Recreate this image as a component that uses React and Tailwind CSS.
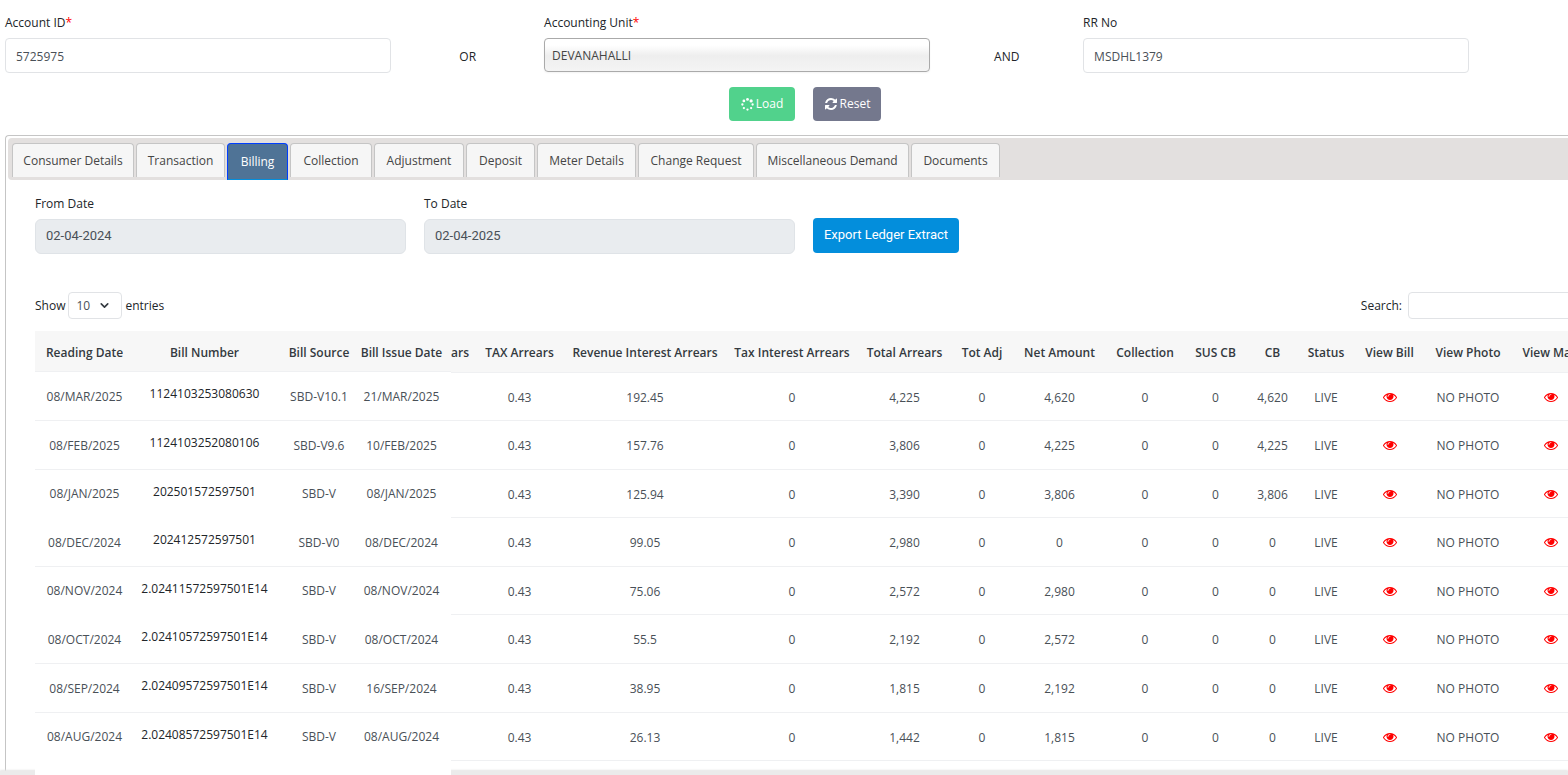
import { ChevronDown } from "lucide-react";

const tabs = [
  { label: "Consumer Details", width: "w-[122px]" },
  { label: "Transaction", width: "w-[89px]" },
  { label: "Billing", width: "w-[61px]" },
  { label: "Collection", width: "w-[82px]" },
  { label: "Adjustment", width: "w-[90px]" },
  { label: "Deposit", width: "w-[69px]" },
  { label: "Meter Details", width: "w-[99px]" },
  { label: "Change Request", width: "w-[116px]" },
  { label: "Miscellaneous Demand", width: "w-[153px]" },
  { label: "Documents", width: "w-[89px]" },
];

const bills = [
  { date: "08/MAR/2025", no: "1124103253080630", src: "SBD-V10.1", issued: "21/MAR/2025", interest: "192.45", total: "4,225", net: "4,620", cb: "4,620" },
  { date: "08/FEB/2025", no: "1124103252080106", src: "SBD-V9.6", issued: "10/FEB/2025", interest: "157.76", total: "3,806", net: "4,225", cb: "4,225" },
  { date: "08/JAN/2025", no: "202501572597501", src: "SBD-V", issued: "08/JAN/2025", interest: "125.94", total: "3,390", net: "3,806", cb: "3,806" },
  { date: "08/DEC/2024", no: "202412572597501", src: "SBD-V0", issued: "08/DEC/2024", interest: "99.05", total: "2,980", net: "0", cb: "0" },
  { date: "08/NOV/2024", no: "2.02411572597501E14", src: "SBD-V", issued: "08/NOV/2024", interest: "75.06", total: "2,572", net: "2,980", cb: "0" },
  { date: "08/OCT/2024", no: "2.02410572597501E14", src: "SBD-V", issued: "08/OCT/2024", interest: "55.5", total: "2,192", net: "2,572", cb: "0" },
  { date: "08/SEP/2024", no: "2.02409572597501E14", src: "SBD-V", issued: "16/SEP/2024", interest: "38.95", total: "1,815", net: "2,192", cb: "0" },
  { date: "08/AUG/2024", no: "2.02408572597501E14", src: "SBD-V", issued: "08/AUG/2024", interest: "26.13", total: "1,442", net: "1,815", cb: "0" },
];

// rows whose divider is hidden in the frozen part
const noLine = [2, 4, 7];

function SpinnerIcon() {
  return (
    <svg width="13" height="13" viewBox="0 0 1792 1792" fill="currentColor" aria-hidden="true">
      <circle cx="896" cy="192" r="192" />
      <circle cx="1394" cy="398" r="224" />
      <circle cx="1600" cy="896" r="160" />
      <circle cx="1394" cy="1394" r="160" />
      <circle cx="896" cy="1600" r="160" />
      <circle cx="398" cy="1394" r="160" />
      <circle cx="192" cy="896" r="160" />
      <circle cx="398" cy="398" r="192" />
    </svg>
  );
}

function RefreshIcon() {
  return (
    <svg width="14" height="14" viewBox="0 0 1792 1792" fill="currentColor" aria-hidden="true">
      <path d="M1639 1056q0 5-1 7-64 268-268 434.5t-478 166.5q-146 0-282.5-55t-243.5-157l-129 129q-19 19-45 19t-45-19-19-45v-448q0-26 19-45t45-19h448q26 0 45 19t19 45-19 45l-137 137q71 66 161 102t187 36q134 0 250-65t186-179q11-17 53-117 8-23 30-23h192q13 0 22.5 9.5t9.5 22.5zm25-800v448q0 26-19 45t-45 19h-448q-26 0-45-19t-19-45 19-45l138-138q-148-137-349-137-134 0-250 65t-186 179q-11 17-53 117-8 23-30 23h-199q-13 0-22.5-9.5t-9.5-22.5v-7q65-268 270-434.5t480-166.5q146 0 284 55.5t245 156.5l130-129q19-19 45-19t45 19 19 45z" />
    </svg>
  );
}

function EyeButton({ label }) {
  return (
    <button type="button" aria-label={label} className="align-middle text-[#ff0000]">
      <svg width="14" height="14" viewBox="0 0 1792 1792" fill="currentColor">
        <path d="M1664 960q-152-236-381-353 61 104 61 225 0 185-131.5 316.5t-316.5 131.5-316.5-131.5-131.5-316.5q0-121 61-225-229 117-381 353 133 205 333.5 326.5t434.5 121.5 434.5-121.5 333.5-326.5zm-720-384q0-20-14-34t-34-14q-125 0-214.5 89.5t-89.5 214.5q0 20 14 34t34 14 34-14 14-34q0-86 61-147t147-61q20 0 34-14t14-34zm848 384q0 34-20 69-140 230-376.5 368.5t-499.5 138.5-499.5-139-376.5-368q-20-35-20-69t20-69q140-229 376.5-368t499.5-139 499.5 139 376.5 368q20 35 20 69z" />
      </svg>
    </button>
  );
}

export default function App() {
  return (
    <div className="overflow-hidden bg-white font-['Open_Sans',sans-serif] text-xs text-[#212529]">
      {/* Search form */}
      <form className="px-[5px] pt-[14px]">
        <div className="grid grid-cols-[24.8%_9.8%_24.8%_9.8%_24.8%]">
          <div>
            <label htmlFor="account" className="block leading-[18px]">
              Account ID<span className="text-[#ff0000]">*</span>
            </label>
            <input id="account" defaultValue="5725975" className="mt-[6px] h-[35px] w-full rounded border border-[#e1e3e6] px-[10px] pt-[2px] text-[#495057]" />
          </div>
          <span className="pt-[34px] text-center leading-[18px]">OR</span>
          <div>
            <label htmlFor="unit" className="block leading-[18px]">
              Accounting Unit<span className="text-[#ff0000]">*</span>
            </label>
            <select id="unit" className="mt-[6px] h-[34px] w-full appearance-none rounded border border-[#aaaaaa] bg-linear-to-b from-white from-20% via-[#eeeeee] via-52% to-[#f4f4f4] px-[7px] pt-[2px] text-[#444444] shadow-xs">
              <option>DEVANAHALLI</option>
            </select>
          </div>
          <span className="pt-[34px] text-center leading-[18px]">AND</span>
          <div>
            <label htmlFor="rr" className="block leading-[18px]">RR No</label>
            <input id="rr" defaultValue="MSDHL1379" className="mt-[6px] h-[35px] w-full rounded border border-[#e1e3e6] px-[10px] pt-[2px] text-[#495057]" />
          </div>
        </div>
        <div className="mt-[14px] flex justify-center gap-[18px] pl-[42px] text-white">
          <button type="button" className="flex h-[34px] w-[66px] items-center justify-center gap-[2px] rounded bg-[#51d28c]">
            <SpinnerIcon /> Load
          </button>
          <button type="reset" className="flex h-[34px] w-[68px] items-center justify-center gap-[2px] rounded bg-[#74788d]">
            <RefreshIcon /> Reset
          </button>
        </div>
      </form>

      {/* Tabbed panel */}
      <div className="mt-[14px] ml-[5px] rounded-tl border-t border-l border-[#c5c5c5] pt-[2px] pb-[10px] pl-[2px]">
        <div role="tablist" className="flex h-[42px] gap-[2px] rounded-l bg-[#e3e0df] pt-[5px] pl-1">
          {tabs.map((tab) => (
            <button
              key={tab.label}
              type="button"
              role="tab"
              aria-selected={tab.label === "Billing"}
              className={`${tab.width} shrink-0 whitespace-nowrap rounded-t-sm border ${
                tab.label === "Billing"
                  ? "h-[37px] border-[#003eff] border-b-[#038edc] bg-[#4f7396] text-white"
                  : "h-[34px] border-b-0 border-[#c5c5c5] bg-[#f6f6f6] text-[#454545]"
              }`}
            >
              {tab.label}
            </button>
          ))}
        </div>

        <div className="pt-[15px] pl-[27px]">
          <div className="flex items-end gap-[18px]">
            <div className="w-[24.2%]">
              <label htmlFor="from" className="block leading-[18px]">From Date</label>
              <input id="from" readOnly defaultValue="02-04-2024" className="mt-[6px] h-[35px] w-full rounded-md border border-[#dfe3e7] bg-[#e9ecef] px-[10px] pb-[2px] font-['Roboto',sans-serif] text-[13px] text-[#495057]" />
            </div>
            <div className="w-[24.2%]">
              <label htmlFor="to" className="block leading-[18px]">To Date</label>
              <input id="to" readOnly defaultValue="02-04-2025" className="mt-[6px] h-[35px] w-full rounded-md border border-[#dfe3e7] bg-[#e9ecef] px-[10px] pb-[2px] font-['Roboto',sans-serif] text-[13px] text-[#495057]" />
            </div>
            <button type="button" className="mb-px h-[35px] w-[146px] rounded bg-[#038edc] pb-[2px] font-['Roboto',sans-serif] text-[13px] text-white">
              Export Ledger Extract
            </button>
          </div>

          <div className="mt-[38px] flex items-center justify-between">
            <label className="flex items-center gap-[3px]">
              Show
              <span className="relative">
                <select className="h-[27px] w-[54px] appearance-none rounded border border-[#e1e3e6] bg-white px-[7px] text-[#495057]">
                  <option>10</option>
                </select>
                <ChevronDown size={13} strokeWidth={3} className="pointer-events-none absolute top-[7px] right-[11px] text-[#343a40]" />
              </span>
              entries
            </label>
            <label className="flex items-center gap-[6px]">
              Search:
              <input type="search" className="-mr-2 h-[27px] w-[168px] rounded border border-[#e1e3e6]" />
            </label>
          </div>

          <div className="mt-3 flex items-start">
            {/* Frozen columns, lie over the page's bottom edge */}
            <div className="relative z-10 -mb-[14px] w-[416px] shrink-0 bg-white pb-[14px]">
              <table className="w-full table-fixed text-center whitespace-nowrap">
                <colgroup>
                  <col className="w-[88px]" />
                  <col className="w-[163px]" />
                  <col className="w-[66px]" />
                  <col className="w-[99px]" />
                </colgroup>
                <thead className="bg-[#f7f7f7] text-[#343a40]">
                  <tr className="h-[40px] border-b border-[#eff0f2]">
                    <th className="overflow-hidden pt-1 font-semibold"><div className="w-[99px]">Reading Date</div></th>
                    <th className="pt-1 font-semibold">Bill Number</th>
                    <th className="pt-1 font-semibold">Bill Source</th>
                    <th className="pt-1 font-semibold">Bill Issue Date</th>
                  </tr>
                </thead>
                <tbody className="text-[#495057]">
                  {bills.map((b, i) => (
                    <tr
                      key={b.date}
                      className={`border-b ${noLine.includes(i) ? "h-[48px] border-white" : "h-[49px] border-[#eff0f2]"}`}
                    >
                      <td className="overflow-hidden pt-[2px]"><div className="w-[99px]">{b.date}</div></td>
                      <td className="pb-[3px] text-[#212529]">{b.no}</td>
                      <td className="pt-[2px]">{b.src}</td>
                      <td className="pt-[2px]">{b.issued}</td>
                    </tr>
                  ))}
                </tbody>
              </table>
            </div>

            {/* Scrolling columns */}
            <div className="min-w-0 flex-1 overflow-hidden">
              <table className="w-[1139px] table-fixed text-center whitespace-nowrap">
                <colgroup>
                  <col className="w-[24px]" />
                  <col className="w-[89px]" />
                  <col className="w-[162px]" />
                  <col className="w-[132px]" />
                  <col className="w-[93px]" />
                  <col className="w-[62px]" />
                  <col className="w-[93px]" />
                  <col className="w-[78px]" />
                  <col className="w-[63px]" />
                  <col className="w-[51px]" />
                  <col className="w-[56px]" />
                  <col className="w-[71px]" />
                  <col className="w-[86px]" />
                  <col className="w-[79px]" />
                </colgroup>
                <thead className="bg-[#f7f7f7] text-[#343a40]">
                  <tr className="h-[41px] border-b border-[#eff0f2]">
                    <th className="pt-[3px] text-left font-semibold">ars</th>
                    <th className="pt-[3px] font-semibold">TAX Arrears</th>
                    <th className="pt-[3px] font-semibold">Revenue Interest Arrears</th>
                    <th className="pt-[3px] font-semibold">Tax Interest Arrears</th>
                    <th className="pt-[3px] font-semibold">Total Arrears</th>
                    <th className="pt-[3px] font-semibold">Tot Adj</th>
                    <th className="pt-[3px] font-semibold">Net Amount</th>
                    <th className="pt-[3px] font-semibold">Collection</th>
                    <th className="pt-[3px] font-semibold">SUS CB</th>
                    <th className="pt-[3px] font-semibold">CB</th>
                    <th className="pt-[3px] font-semibold">Status</th>
                    <th className="pt-[3px] font-semibold">View Bill</th>
                    <th className="pt-[3px] font-semibold">View Photo</th>
                    <th className="pt-[3px] font-semibold">View Map</th>
                  </tr>
                </thead>
                <tbody className="text-[#495057]">
                  {bills.map((b, i) => (
                    <tr
                      key={b.date}
                      className={`border-b border-[#eff0f2] ${[0, 2, 4, 7].includes(i) ? "h-[48px]" : "h-[49px]"}`}
                    >
                      <td />
                      <td className="pt-[3px]">0.43</td>
                      <td className="pt-[3px]">{b.interest}</td>
                      <td className="pt-[3px]">0</td>
                      <td className="pt-[3px]">{b.total}</td>
                      <td className="pt-[3px]">0</td>
                      <td className="pt-[3px]">{b.net}</td>
                      <td className="pt-[3px]">0</td>
                      <td className="pt-[3px]">0</td>
                      <td className="pt-[3px]">{b.cb}</td>
                      <td className="pt-[3px]">LIVE</td>
                      <td><EyeButton label="View bill" /></td>
                      <td className="pt-[3px]">NO PHOTO</td>
                      <td><EyeButton label="View map" /></td>
                    </tr>
                  ))}
                </tbody>
              </table>
            </div>
          </div>
        </div>
      </div>
      <div className="h-1 bg-[#ebebeb] shadow-[0_-1px_2px_#e5e5e5]" />
    </div>
  );
}
